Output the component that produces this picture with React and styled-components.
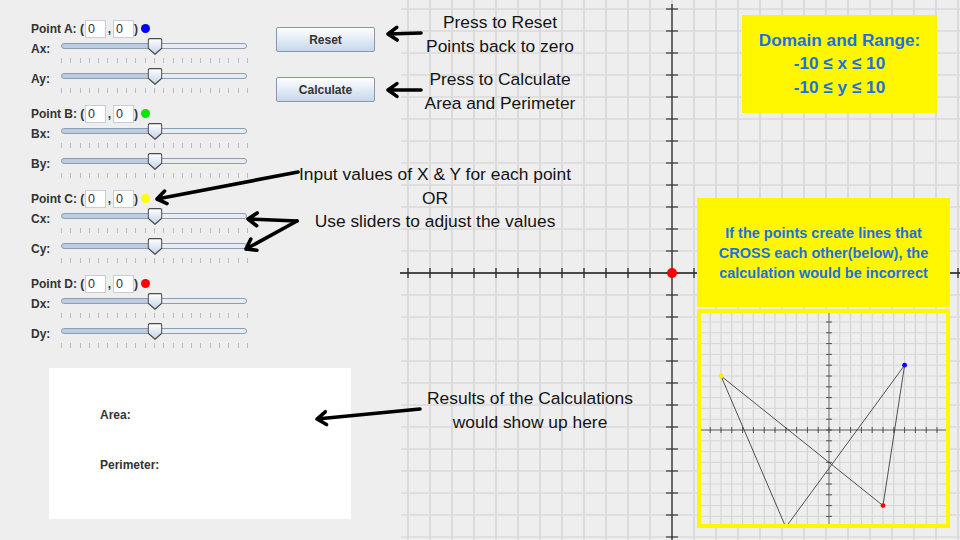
import styled, { createGlobalStyle } from "styled-components"

const GlobalStyle = createGlobalStyle`
  html, body {
    margin: 0;
    padding: 0;
  }
  body {
    background: #eeeeee;
    font-family: "Liberation Sans", Arial, sans-serif;
  }
`

const points = [
    { name: "A", color: "#0000ff" },
    { name: "B", color: "#00e600" },
    { name: "C", color: "#ffff00" },
    { name: "D", color: "#ff0000" },
]

// the little picture inside the warning card (crossing lines example)
const examplePoints = [
    { x: 7, y: 6, color: "#0000ff" },
    { x: -4, y: -9, color: "#00c000" },
    { x: -10, y: 5, color: "#ffee00" },
    { x: 5, y: -7, color: "#ff0000" },
]

const range = (a, b) => Array.from({ length: b - a + 1 }, (_, i) => a + i)

const arrowPath = (x1, y1, x2, y2, head = 11) => {
    const a = Math.atan2(y1 - y2, x1 - x2)
    const s = 0.62
    const p1 = [x2 + head * Math.cos(a + s), y2 + head * Math.sin(a + s)]
    const p2 = [x2 + head * Math.cos(a - s), y2 + head * Math.sin(a - s)]
    return `M${x1} ${y1} L${x2} ${y2} M${p1[0]} ${p1[1]} L${x2} ${y2} L${p2[0]} ${p2[1]}`
}

const arrows = [
    [421, 33, 388, 34],
    [421, 90, 388, 90],
    [298, 172, 157, 199],
    [297, 221, 248, 219],
    [297, 221, 246, 249],
    [420, 409, 317, 419],
]

const Screen = styled.div`
    position: relative;
    display: flex;
    width: 960px;
    height: 540px;
    overflow: hidden;
    background: #eeeeee;
`

const LeftPanel = styled.div`
    width: 400px;
    flex-shrink: 0;
    display: flex;
    flex-direction: column;
`

const Controls = styled.div`
    display: flex;
`

const SliderColumn = styled.div`
    width: 260px;
    box-sizing: border-box;
    padding: 19px 0 0 31px;
    display: flex;
    flex-direction: column;
    gap: 6px;
`

const PointGroup = styled.div`
    display: flex;
    flex-direction: column;
`

const PointRow = styled.div`
    display: flex;
    align-items: center;
    height: 19px;
    font-size: 12px;
    font-weight: bold;
    color: #333;
`

const PointLabel = styled.span`
    width: 54px;
    white-space: nowrap;
`

const Field = styled.div`
    width: 21px;
    height: 18px;
    box-sizing: border-box;
    background: #ffffff;
    border: 1px solid #c3cfdc;
    padding-left: 2px;
    font-weight: normal;
    font-size: 12.5px;
    line-height: 16px;
    color: #333;
`

const Comma = styled.span`
    width: 7px;
    text-align: center;
`

const Paren = styled.span`
    width: 4px;
`

const Dot = styled.span`
    width: 9px;
    height: 9px;
    margin-left: 3px;
    border-radius: 50%;
    background: ${props => props.color};
`

const SliderRow = styled.div`
    display: flex;
    height: 30px;
`

const AxisLabel = styled.span`
    width: 30px;
    padding-top: 3px;
    font-size: 12px;
    line-height: 16px;
    font-weight: bold;
    color: #333;
`

const SliderBody = styled.div`
    width: 187px;
    display: flex;
    flex-direction: column;
`

const TrackArea = styled.div`
    position: relative;
    height: 16px;
    display: flex;
    align-items: center;
`

const Track = styled.div`
    width: 186px;
    height: 6px;
    box-sizing: border-box;
    border: 1px solid #8d9db2;
    border-radius: 3px;
    background: linear-gradient(to right, #bccde3 ${props => props.fill}%, #e8ecf1 ${props => props.fill}%);
`

const Thumb = styled.svg`
    position: absolute;
    top: 0;
    left: ${props => props.pos}%;
    transform: translateX(-50%);
`

const TickRow = styled.div`
    display: flex;
    justify-content: space-between;
    margin-top: 4px;
    height: 5px;
`

const Tick = styled.span`
    width: 1px;
    height: 5px;
    background: #b8bcc2;
`

const ButtonColumn = styled.div`
    margin-left: 16px;
    padding-top: 27px;
    display: flex;
    flex-direction: column;
    gap: 25px;
`

const Button = styled.button`
    width: 99px;
    height: 25px;
    border: 1px solid #8698ae;
    border-radius: 2px;
    background: linear-gradient(to bottom, #ffffff, #c6d7eb);
    font-family: "Liberation Sans", Arial, sans-serif;
    font-size: 12px;
    font-weight: bold;
    color: #333;
    padding: 0;
`

const ResultsBox = styled.div`
    width: 302px;
    height: 151px;
    margin: 15px 0 0 49px;
    box-sizing: border-box;
    padding: 40px 0 0 51px;
    background: #ffffff;
    display: flex;
    flex-direction: column;
    gap: 36px;
`

const ResultLabel = styled.span`
    font-size: 12px;
    line-height: 14px;
    font-weight: bold;
    color: #333;
`

const GraphPanel = styled.div`
    position: relative;
    flex: 1;
`

const DomainBox = styled.div`
    position: absolute;
    left: 342px;
    top: 15px;
    width: 195px;
    height: 98px;
    background: #fff700;
    display: flex;
    flex-direction: column;
    align-items: center;
    justify-content: center;
    color: #1c6fe6;
    font-size: 17.2px;
    line-height: 23.5px;
    font-weight: bold;
`

const WarningCard = styled.div`
    position: absolute;
    left: 297px;
    top: 198px;
    width: 253px;
    display: flex;
    flex-direction: column;
    gap: 2px;
`

const WarningText = styled.div`
    height: 109px;
    background: #fff700;
    display: flex;
    align-items: center;
    justify-content: center;
    text-align: center;
    color: #1c6fe6;
    font-size: 14.5px;
    line-height: 20px;
    font-weight: bold;
`

const ExampleFrame = styled.div`
    height: 219px;
    box-sizing: border-box;
    border: 4px solid #fff700;
    background: #eeeeee;
`

const Note = styled.div`
    position: absolute;
    left: ${props => props.x - 150}px;
    top: ${props => props.y}px;
    width: 300px;
    text-align: center;
    font-size: 17.4px;
    line-height: ${props => props.lh || 24}px;
    color: #141414;
    white-space: nowrap;
`

const ArrowLayer = styled.svg`
    position: absolute;
    left: 0;
    top: 0;
    pointer-events: none;
`

const SliderThumb = ({ pos }) => (
    <Thumb pos={pos} width="15" height="17" viewBox="0 0 15 17">
        <defs>
            <linearGradient id="thumbFill" x1="0" y1="0" x2="0" y2="1">
                <stop offset="0" stopColor="#ffffff" />
                <stop offset="1" stopColor="#c2d3e7" />
            </linearGradient>
        </defs>
        <path d="M2.5 0.7 H12.5 Q14.3 0.7 14.3 2.5 V10.2 L7.5 16.3 L0.7 10.2 V2.5 Q0.7 0.7 2.5 0.7 Z" fill="url(#thumbFill)" stroke="#4b4b4b" strokeWidth="1.2" />
    </Thumb>
)

const Slider = ({ label, value = 0 }) => {
    const pos = ((value + 10) / 20) * 100
    return (
        <SliderRow>
            <AxisLabel>{label}</AxisLabel>
            <SliderBody>
                <TrackArea>
                    <Track fill={pos} />
                    <SliderThumb pos={pos} />
                </TrackArea>
                <TickRow>
                    {range(-10, 10).map(t => <Tick key={t} />)}
                </TickRow>
            </SliderBody>
        </SliderRow>
    )
}

const MainGrid = () => {
    const ox = 272
    const oy = 273
    const g = 22
    const xs = range(-12, 13).map(k => ox + k * g)
    const ys = range(-12, 12).map(k => oy + k * g)
    return (
        <svg width="560" height="540" style={{ display: "block" }}>
            {xs.map(x => <line key={"v" + x} x1={x} y1="0" x2={x} y2="540" stroke="#d4d4d4" strokeWidth="1.5" />)}
            {ys.map(y => <line key={"h" + y} x1="1" y1={y} x2="560" y2={y} stroke="#dadada" strokeWidth="1.6" />)}
            <line x1="0" y1={oy} x2="560" y2={oy} stroke="#4a4a4a" strokeWidth="1.8" />
            <line x1={ox} y1="4" x2={ox} y2="540" stroke="#5a5a5a" strokeWidth="1.8" />
            {xs.map(x => <line key={"tx" + x} x1={x} y1={oy - 5} x2={x} y2={oy + 5} stroke="#333" strokeWidth="1.4" />)}
            {ys.map(y => <line key={"ty" + y} x1={ox - 6} y1={y} x2={ox + 6} y2={y} stroke="#333" strokeWidth="1.2" />)}
            <circle cx={ox} cy={oy} r="5" fill="#ff0000" />
        </svg>
    )
}

const ExampleGraph = () => {
    const ox = 128
    const oy = 117
    const g = 10.8
    const xs = range(-12, 11).map(k => ox + k * g).filter(x => x >= 0 && x <= 245)
    const ys = range(-11, 9).map(k => oy + k * g).filter(y => y >= 0 && y <= 211)
    const pts = examplePoints.map(p => ({ ...p, px: ox + p.x * g, py: oy - p.y * g }))
    return (
        <svg width="245" height="211" style={{ display: "block" }}>
            {xs.map(x => <line key={"v" + x} x1={x} y1="0" x2={x} y2="211" stroke="#d0d0d0" strokeWidth="1" />)}
            {ys.map(y => <line key={"h" + y} x1="0" y1={y} x2="245" y2={y} stroke="#d6d6d6" strokeWidth="1" />)}
            <line x1="0" y1={oy} x2="245" y2={oy} stroke="#666" strokeWidth="1" />
            <line x1={ox} y1="0" x2={ox} y2="211" stroke="#777" strokeWidth="1" />
            {xs.map(x => <line key={"tx" + x} x1={x} y1={oy - 3} x2={x} y2={oy + 3} stroke="#444" strokeWidth="0.9" />)}
            {ys.map(y => <line key={"ty" + y} x1={ox - 3} y1={y} x2={ox + 3} y2={y} stroke="#444" strokeWidth="0.9" />)}
            <polygon points={pts.map(p => `${p.px},${p.py}`).join(" ")} fill="none" stroke="#2a2a2a" strokeWidth="0.8" />
            {pts.map(p => <circle key={p.color} cx={p.px} cy={p.py} r="2.4" fill={p.color} />)}
        </svg>
    )
}

const App = () => {
    return (
        <Screen>
            <GlobalStyle />
            <LeftPanel>
                <Controls>
                    <SliderColumn>
                        {points.map(p => (
                            <PointGroup key={p.name}>
                                <PointRow>
                                    <PointLabel>Point {p.name}: (</PointLabel>
                                    <Field>0</Field>
                                    <Comma>,</Comma>
                                    <Field>0</Field>
                                    <Paren>)</Paren>
                                    <Dot color={p.color} />
                                </PointRow>
                                <Slider label={`${p.name}x:`} />
                                <Slider label={`${p.name}y:`} />
                            </PointGroup>
                        ))}
                    </SliderColumn>
                    <ButtonColumn>
                        <Button>Reset</Button>
                        <Button>Calculate</Button>
                    </ButtonColumn>
                </Controls>
                <ResultsBox>
                    <ResultLabel>Area:</ResultLabel>
                    <ResultLabel>Perimeter:</ResultLabel>
                </ResultsBox>
            </LeftPanel>

            <GraphPanel>
                <MainGrid />
                <DomainBox>
                    <span>Domain and Range:</span>
                    <span>-10 ≤ x ≤ 10</span>
                    <span>-10 ≤ y ≤ 10</span>
                </DomainBox>
                <WarningCard>
                    <WarningText>
                        If the points create lines that<br />
                        CROSS each other(below), the<br />
                        calculation would be incorrect
                    </WarningText>
                    <ExampleFrame>
                        <ExampleGraph />
                    </ExampleFrame>
                </WarningCard>
            </GraphPanel>

            <Note x={500} y={10}>Press to Reset<br />Points back to zero</Note>
            <Note x={500} y={68} lh={23.5}>Press to Calculate<br />Area and Perimeter</Note>
            <Note x={435} y={163} lh={23.5}>Input values of X &amp; Y for each point<br />OR<br />Use sliders to adjust the values</Note>
            <Note x={530} y={386}>Results of the Calculations<br />would show up here</Note>

            <ArrowLayer width="960" height="540">
                {arrows.map((a, i) => (
                    <path key={i} d={arrowPath(...a)} fill="none" stroke="#000" strokeWidth="3.6" strokeLinecap="round" strokeLinejoin="round" />
                ))}
            </ArrowLayer>
        </Screen>
    )
}

export default App
